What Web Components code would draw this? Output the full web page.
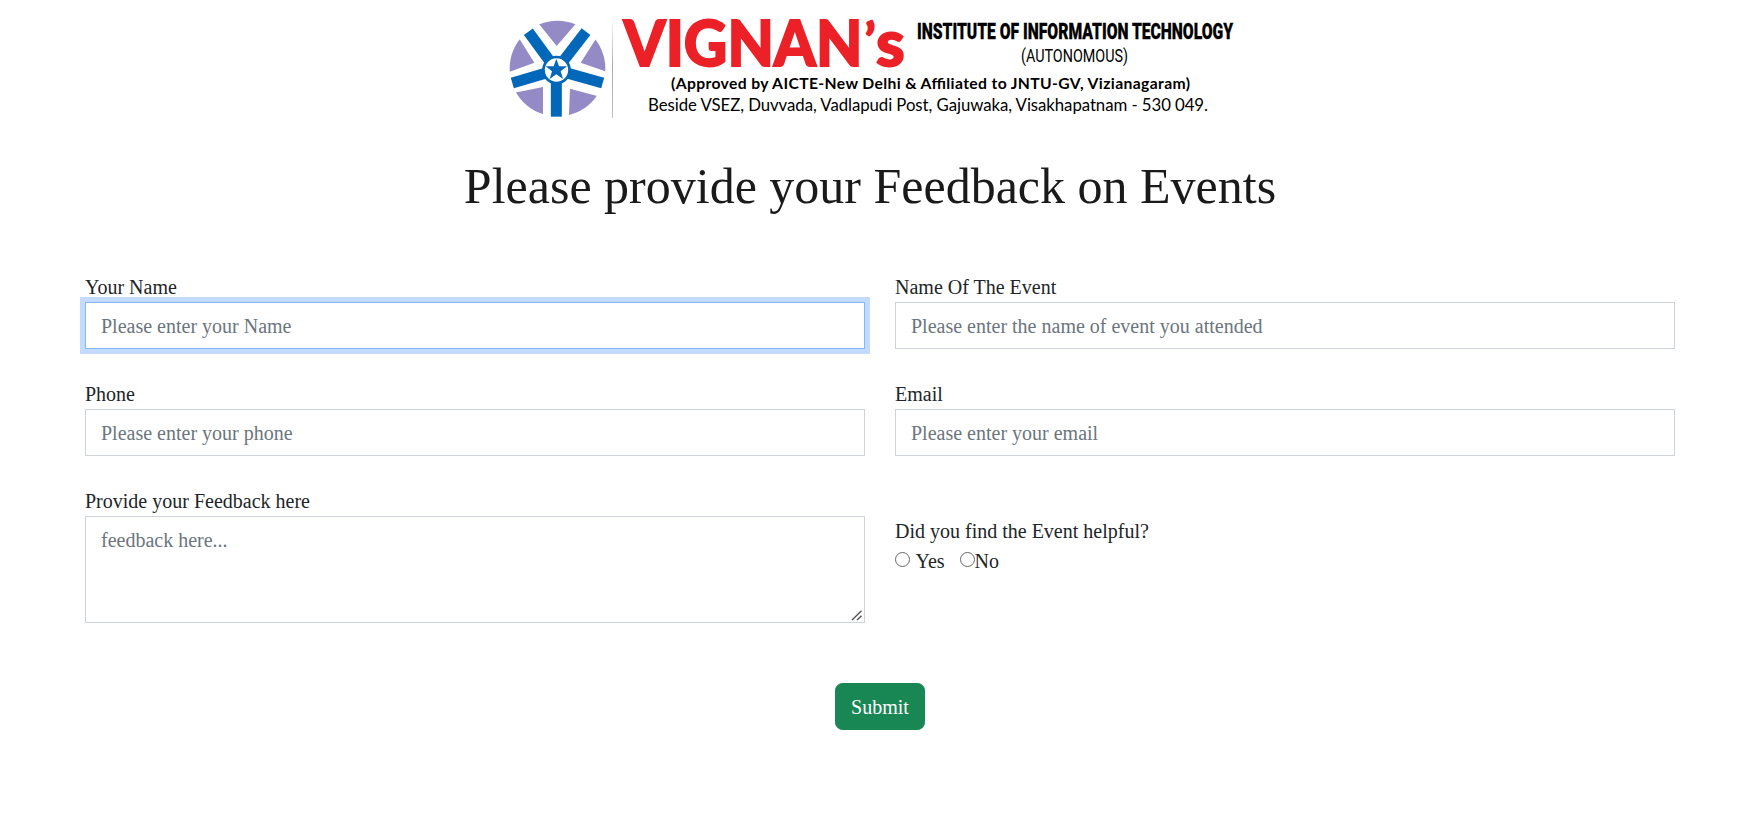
<!DOCTYPE html>
<html lang="en">
<head>
<meta charset="utf-8">
<title>Event Feedback</title>
<style>
body { margin: 0; background: #fff; color: #212529; font: 20px/30px "Liberation Serif", "Times New Roman", serif; }
</style>
</head>
<body>
<feedback-page></feedback-page>
<script>
const define = (name, html, setup) => {
  const t = document.createElement('template');
  t.innerHTML = html;
  customElements.define(name, class extends HTMLElement {
    constructor() {
      super();
      this.attachShadow({ mode: 'open' }).append(t.content.cloneNode(true));
    }
    connectedCallback() { if (setup) setup(this, this.shadowRoot); }
  });
};

define('college-banner', `
<style>
:host { display: block; width: 740px; height: 125px; }
svg { display: block; overflow: visible; }
text { white-space: pre; }
</style>
<svg width="740" height="125" viewBox="500 0 740 125">
  <defs>
    <clipPath id="disc"><circle cx="172.500" cy="176" r="143.500"/></clipPath>
    <linearGradient id="fade" x1="0" y1="0" x2="0" y2="1">
      <stop offset="0" stop-color="#aaa" stop-opacity="0"/>
      <stop offset=".5" stop-color="#aaa"/>
      <stop offset="1" stop-color="#aaa" stop-opacity=".7"/>
    </linearGradient>
  </defs>
  <g transform="translate(500 10) scale(.33333)">
    <g clip-path="url(#disc)">
      <g fill="#948ac5">
        <path d="M170 108 105 27V0H240V27Z"/>
        <path d="M103 158 59 88 0 60V196Z"/>
        <path d="M242 158 287 88 350 60V196Z"/>
        <path d="M129 231 40 249 0 340H129Z"/>
        <path d="M210 236 300 260 330 340H206Z"/>
      </g>
    </g>
    <g stroke="#0067b9" stroke-width="33" fill="none">
      <path d="M169 180V320"/>
      <path d="M169 180 37 219"/>
      <path d="M169 180 308 219"/>
      <path d="M169 180 85 65"/>
      <path d="M169 180 258 65"/>
    </g>
    <circle cx="169.500" cy="180" r="39" fill="#fff" stroke="#0067b9" stroke-width="8"/>
    <path fill="#0067b9" d="M169 146 177 169H201L182 184 189 207 169 193 149 207 156 184 137 169H161Z"/>
  </g>
  <rect x="612" y="16" width="1" height="102" fill="url(#fade)"/>
  <text y="65.500" font-family="Lato, sans-serif" font-weight="900" font-size="62.500" fill="#ec2127" stroke="#ec2127" stroke-width="1.800"><tspan x="623.500" textLength="239" lengthAdjust="spacingAndGlyphs">VIGNAN</tspan><tspan x="865" y="56" font-size="46">’</tspan><tspan x="876" y="65.500" font-size="65">s</tspan></text>
  <text x="917" y="39" font-family="Roboto, sans-serif" font-weight="900" font-size="21.500" stroke="#000" stroke-width=".3" textLength="316" lengthAdjust="spacingAndGlyphs">INSTITUTE OF INFORMATION TECHNOLOGY</text>
  <text x="1021" y="62" font-family="Roboto, sans-serif" font-size="17.500" textLength="107" lengthAdjust="spacingAndGlyphs">(AUTONOMOUS)</text>
  <text x="671" y="89" font-family="Lato, sans-serif" font-weight="700" font-size="15.700" textLength="519" lengthAdjust="spacing">(Approved by AICTE-New Delhi &amp; Affiliated to JNTU-GV, Vizianagaram)</text>
  <text x="648" y="111" font-family="Lato, sans-serif" font-size="16.800" textLength="560" lengthAdjust="spacing">Beside VSEZ, Duvvada, Vadlapudi Post, Gajuwaka, Visakhapatnam - 530 049.</text>
</svg>`);

define('form-field', `
<style>
:host { display: block; }
label { display: block; height: 30px; }
.box { display: grid; }
input, textarea { grid-area: 1 / 1; display: block; box-sizing: border-box; width: 100%; margin: 0; padding: 7.5px 15px; border: 1px solid #ced4da; border-radius: 0; background: #fff; color: #212529; font: inherit; outline: 0; }
input { height: 47px; padding: 8px 15px 7px; }
textarea { height: 107px; resize: none; padding-top: 8px; }
::placeholder { color: #6c757d; opacity: 1; }
:host([active]) input { border-color: #86b7fe; box-shadow: 0 0 0 5px #c2dbff; }
svg { grid-area: 1 / 1; place-self: end; margin: 0 2px 2px 0; z-index: 1; }
:host(:not([multiline])) svg { display: none; }
</style>
<label><slot></slot></label>
<div class="box"><svg width="12" height="11" viewBox="0 0 12 11" stroke="#505054" stroke-width="1.300" fill="none"><path d="M1 10 10.500 .800M6 10 10.500 5.700"/></svg></div>`, (host, root) => {
  const box = document.createElement(host.hasAttribute('multiline') ? 'textarea' : 'input');
  box.placeholder = host.getAttribute('placeholder');
  root.querySelector('.box').prepend(box);
});

define('radio-choice', `
<style>
:host { display: inline-flex; }
label { display: flex; gap: var(--gap, 0px); }
input { appearance: none; box-sizing: border-box; width: 15px; height: 15px; margin: 6px 0 0; border: 1.250px solid #6a6a6a; border-radius: 50%; background: #fff; }
input:checked { background: radial-gradient(#0d6efd 4px, #fff 5px); }
</style>
<label><input type="radio"><span><slot></slot></span></label>`);

define('submit-button', `
<style>
:host { display: block; }
button { display: block; height: 47px; padding: 1px 15px 0; border: 1px solid #198754; border-radius: 7.5px; background: #198754; color: #fff; font: inherit; width: 90px; }
</style>
<button type="button"><slot></slot></button>`);

define('feedback-page', `
<style>
:host { display: block; height: 830px; overflow: hidden; }
header { width: 1740px; display: flex; flex-direction: column; align-items: center; }
h1 { margin: 31px 0 0; font-size: 50px; line-height: 60px; font-weight: 400; color: #1a1a1a; white-space: nowrap; }
form { margin: 56px 88px 0 85px; display: grid; grid-template-columns: 780px 780px; gap: 30px; }
.helpful { padding-top: 30px; }
.choices { display: flex; gap: 15px; }
.spaced { --gap: 5.5px; }
footer { display: flex; justify-content: center; margin-top: 60px; padding-right: 3px; }
</style>
<header>
  <college-banner></college-banner>
  <h1>Please provide your Feedback on Events</h1>
</header>
<form>
  <form-field active placeholder="Please enter your Name">Your Name</form-field>
  <form-field placeholder="Please enter the name of event you attended">Name Of The Event</form-field>
  <form-field placeholder="Please enter your phone">Phone</form-field>
  <form-field placeholder="Please enter your email">Email</form-field>
  <form-field multiline placeholder="feedback here...">Provide your Feedback here</form-field>
  <div class="helpful">
    <div>Did you find the Event helpful?</div>
    <div class="choices"><radio-choice class="spaced">Yes</radio-choice><radio-choice>No</radio-choice></div>
  </div>
</form>
<footer><submit-button>Submit</submit-button></footer>`);
</script>
</body>
</html>
